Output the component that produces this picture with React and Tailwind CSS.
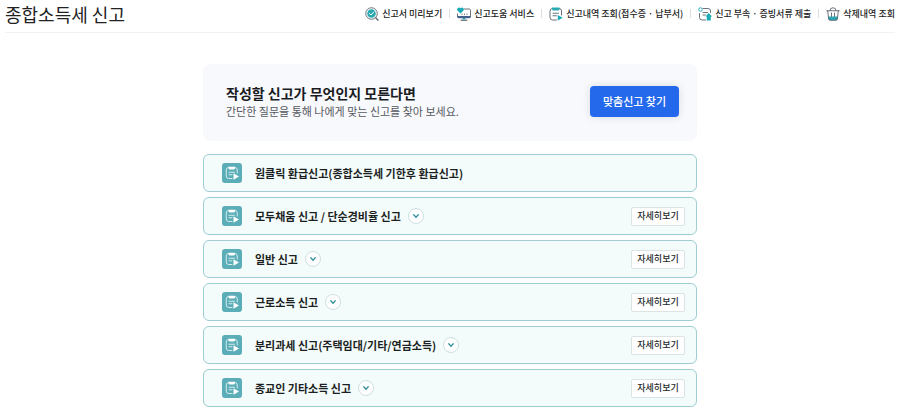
const QUICK_LINKS = [
  { label: "신고서 미리보기", icon: PreviewIcon },
  { label: "신고도움 서비스", icon: HelpIcon },
  { label: "신고내역 조회(접수증 · 납부서)", icon: HistoryIcon },
  { label: "신고 부속 · 증빙서류 제출", icon: SubmitIcon },
  { label: "삭제내역 조회", icon: TrashIcon },
];

const REPORTS = [
  { title: "원클릭 환급신고(종합소득세 기한후 환급신고)", expandable: false },
  { title: "모두채움 신고 / 단순경비율 신고", expandable: true },
  { title: "일반 신고", expandable: true },
  { title: "근로소득 신고", expandable: true },
  { title: "분리과세 신고(주택임대/기타/연금소득)", expandable: true },
  { title: "종교인 기타소득 신고", expandable: true },
];

function PreviewIcon() {
  return (
    <svg className="size-[14px] shrink-0" viewBox="0 0 28 28" fill="none" aria-hidden="true">
      <circle cx="13" cy="13" r="11.5" stroke="#5a636e" strokeWidth="1.8" />
      <circle cx="13" cy="13" r="8.5" fill="#2aa9b3" />
      <path d="M9 13l3 3 5.5-6" stroke="#fff" strokeWidth="2" strokeLinecap="round" strokeLinejoin="round" />
      <path d="M21.5 21.5l4.5 5" stroke="#5a636e" strokeWidth="2.4" strokeLinecap="round" />
    </svg>
  );
}

function HelpIcon() {
  return (
    <svg className="size-[14px] shrink-0" viewBox="0 0 28 28" fill="none" aria-hidden="true">
      <path d="M14 4h10.5A2.500 2.500 0 0 1 27 6.500V20H1v-7" stroke="#5a636e" strokeWidth="1.8" />
      <path d="M1 18h26v2.500a2 2 0 0 1-2 2H3a2 2 0 0 1-2-2z" fill="#45618c" />
      <path d="M11 22h6v3h-6z" fill="#2aa9b3" />
      <path d="M8 26.500h12" stroke="#4b5563" strokeWidth="2" strokeLinecap="round" />
      <path d="M7 13L1 7A3.600 3.600 0 0 1 7 2.600 3.600 3.600 0 0 1 13 7z" fill="#19aab5" />
      <path d="M9 14.500h2M14 14.500h2M19 14.500h2" stroke="#4b5563" strokeWidth="2" />
    </svg>
  );
}

function HistoryIcon() {
  return (
    <svg className="size-[14px] shrink-0" viewBox="0 0 28 28" fill="none" aria-hidden="true">
      <path
        d="M15 26H7a5 5 0 0 1-5-5V8a5 5 0 0 1 5-5h13a5 5 0 0 1 5 5v8"
        stroke="#5a636e"
        strokeWidth="1.8"
        strokeLinecap="round"
      />
      <path d="M6 1h15v3a3 3 0 0 1-3 3H9a3 3 0 0 1-3-3z" fill="#2aa9b3" />
      <path d="M8 12.500h11M8 17.500h7" stroke="#5a636e" strokeWidth="1.8" strokeLinecap="round" />
      <path d="M17.500 16l10 5.500-10 5.500z" fill="#19aab5" />
    </svg>
  );
}

function SubmitIcon() {
  return (
    <svg className="size-[14px] shrink-0" viewBox="0 0 28 28" fill="none" aria-hidden="true">
      <path
        d="M15 26H8a5 5 0 0 1-5-5v-8M10 3h10a5 5 0 0 1 5 5v3"
        stroke="#5a636e"
        strokeWidth="1.8"
        strokeLinecap="round"
      />
      <circle cx="5" cy="5" r="3.500" stroke="#2aa9b3" strokeWidth="2" />
      <path d="M10 11h9M10 16h5" stroke="#5a636e" strokeWidth="1.8" strokeLinecap="round" />
      <path d="M21.500 12l6.500 7h-2.500v8h-8v-8H15z" fill="#19aab5" />
    </svg>
  );
}

function TrashIcon() {
  return (
    <svg className="size-[14px] shrink-0" viewBox="0 0 28 28" fill="none" aria-hidden="true">
      <path d="M4.500 19h19l-.7 5a3 3 0 0 1-3 2.500H8.200a3 3 0 0 1-3-2.500z" fill="#2aa9b3" />
      <path
        d="M1.500 7.500h25M3.500 8l1.700 16a3 3 0 0 0 3 2.500h11.600a3 3 0 0 0 3-2.500l1.700-16M8 7a6 5.500 0 0 1 12 0"
        stroke="#5a636e"
        strokeWidth="1.8"
        strokeLinecap="round"
      />
      <path d="M11 12v7M17 12v7" stroke="#5a636e" strokeWidth="1.8" strokeLinecap="round" />
    </svg>
  );
}

function ReportIcon() {
  return (
    <span className="flex size-5 shrink-0 items-center justify-center rounded-[3px] bg-[#5badb7]">
      <svg className="size-[14px]" viewBox="0 0 28 28" fill="none" aria-hidden="true">
        <path
          d="M14 25H7.500a5 5 0 0 1-5-5V8a5 5 0 0 1 5-5h12a5 5 0 0 1 5 5v6"
          stroke="#d3ecee"
          strokeWidth="2"
          strokeLinecap="round"
        />
        <path d="M7 1.500h13v2.500a3 3 0 0 1-3 3h-7a3 3 0 0 1-3-3z" fill="#fff" />
        <path d="M8 12.500h11M8 17.500h6" stroke="#d3ecee" strokeWidth="2" strokeLinecap="round" />
        <path d="M17 14.500l11 6.500-11 6.500z" fill="#fff" />
      </svg>
    </span>
  );
}

function ReportRow({ title, expandable }) {
  return (
    <li className="flex min-h-[38px] items-center rounded-md border border-[#9fcdd1] bg-[#f3fcfb] pr-[11px] pl-[18px]">
      <ReportIcon />
      <a href="#" className="ml-[13px] text-[11px] leading-4 font-bold text-[#1c1f22]">
        {title}
      </a>
      {expandable && (
        <>
          <button
            type="button"
            aria-label={`${title} 펼치기`}
            className="ml-[7px] flex size-4 shrink-0 items-center justify-center rounded-full border border-[#cfdfe2] bg-white"
          >
            <svg className="size-[6px]" viewBox="0 0 12 12" fill="none" aria-hidden="true">
              <path d="M1.500 3.500L6 8.500l4.500-5" stroke="#2f8f98" strokeWidth="2.400" strokeLinecap="round" />
            </svg>
          </button>
          <button
            type="button"
            className="ml-auto h-[19px] w-[54px] shrink-0 rounded-xs border border-[#dbe3e5] bg-white text-[9px] leading-4 font-medium text-[#26292c]"
          >
            자세히보기
          </button>
        </>
      )}
    </li>
  );
}

export default function App() {
  return (
    <div className="min-h-screen bg-white font-['Noto_Sans_CJK_KR',sans-serif] text-[#222]">
      <header className="mx-[5px] flex h-[33px] items-center justify-between border-b border-[#f1f2f4] pb-[5px]">
        <h1 className="text-[18px] leading-6 font-normal text-[#222]">종합소득세 신고</h1>
        <nav>
          <ul className="flex items-center">
            {QUICK_LINKS.map(({ label, icon: Icon }, index) => (
              <li key={label} className="flex items-center">
                {index > 0 && <span className="mx-[7px] h-[9px] w-px bg-[#dcdfe2]" />}
                <a href="#" className="flex items-center gap-[3px] text-[9px] leading-4 font-medium whitespace-nowrap">
                  <Icon />
                  {label}
                </a>
              </li>
            ))}
          </ul>
        </nav>
      </header>

      <main className="mx-auto max-w-[494px] pt-[31px]">
        <section className="flex min-h-[77px] items-center justify-between rounded-lg bg-[#f8f9fd] pr-[18px] pl-[23px]">
          <div className="pb-1">
            <h2 className="text-[14px] leading-5 font-bold text-[#1a1c1f]">작성할 신고가 무엇인지 모른다면</h2>
            <p className="text-[11px] leading-4 text-[#55585c]">간단한 질문을 통해 나에게 맞는 신고를 찾아 보세요.</p>
          </div>
          <button
            type="button"
            className="mb-[2px] h-[31px] w-[89px] rounded-[4px] bg-[#2469eb] pb-[2px] text-[11px] leading-4 font-medium text-white shadow-[0_0_8px_rgba(0,0,0,0.12)]"
          >
            맞춤신고 찾기
          </button>
        </section>

        <ul className="mt-[13px] flex flex-col gap-[5px]">
          {REPORTS.map((report) => (
            <ReportRow key={report.title} title={report.title} expandable={report.expandable} />
          ))}
        </ul>
      </main>
    </div>
  );
}
